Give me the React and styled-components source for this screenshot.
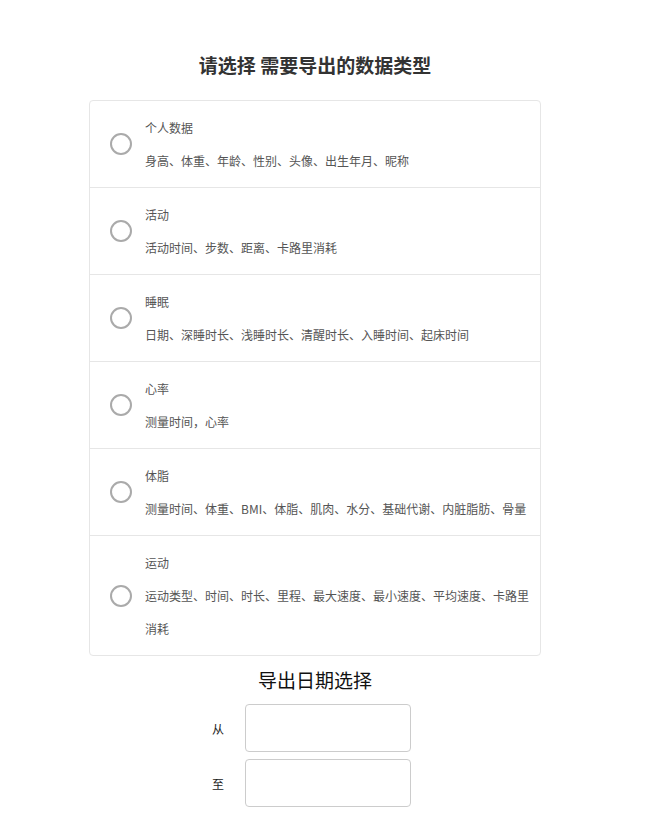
import React from "react";
import styled, { createGlobalStyle } from "styled-components";

const GlobalStyle = createGlobalStyle`
  body {
    margin: 0;
    background: #fff;
    font-family: "Noto Sans CJK SC", "Noto Sans", sans-serif;
  }
`;

const Page = styled.div`
  width: 630px;
  padding-top: 53px;
`;

const Title = styled.h2`
  margin: 0 0 23px;
  font-size: 19px;
  line-height: 24px;
  font-weight: 700;
  color: #333;
  text-align: center;
`;

const Card = styled.div`
  width: 450px;
  margin: 0 auto;
  border: 1px solid #e6e6e6;
  border-radius: 4px;
`;

const Row = styled.label`
  display: flex;
  align-items: center;
  gap: 13px;
  padding: 10px 10px 10px 20px;
  border-top: ${(p) => (p.first ? "none" : "1px solid #e6e6e6")};
  cursor: pointer;
`;

const Radio = styled.span`
  flex: none;
  width: 18px;
  height: 18px;
  border: 2px solid #aaa;
  border-radius: 50%;
`;

const Text = styled.div`
  flex: 1;
  font-size: 12px;
  line-height: 33px;
  color: #555;
`;

const DateTitle = styled.h3`
  margin: 11px 0 11px;
  font-size: 19px;
  line-height: 26px;
  font-weight: 400;
  color: #111;
  text-align: center;
`;

const DateForm = styled.div`
  display: flex;
  flex-direction: column;
  gap: 7px;
  padding-left: 212px;
`;

const DateRow = styled.div`
  display: flex;
  align-items: center;
  gap: 21px;
`;

const DateLabel = styled.span`
  width: 12px;
  font-size: 12px;
  color: #222;
`;

const DateInput = styled.input`
  box-sizing: border-box;
  width: 166px;
  height: 48px;
  border: 1px solid #ccc;
  border-radius: 4px;
  outline: none;
  font-size: 14px;
`;

const types = [
  { name: "个人数据", desc: "身高、体重、年龄、性别、头像、出生年月、昵称" },
  { name: "活动", desc: "活动时间、步数、距离、卡路里消耗" },
  { name: "睡眠", desc: "日期、深睡时长、浅睡时长、清醒时长、入睡时间、起床时间" },
  { name: "心率", desc: "测量时间，心率" },
  { name: "体脂", desc: "测量时间、体重、BMI、体脂、肌肉、水分、基础代谢、内脏脂肪、骨量" },
  { name: "运动", desc: "运动类型、时间、时长、里程、最大速度、最小速度、平均速度、卡路里消耗" },
];

export default function App() {
  return (
    <>
      <GlobalStyle />
      <Page>
        <Title>请选择 需要导出的数据类型</Title>
        <Card>
          {types.map((t, i) => (
            <Row key={t.name} first={i === 0}>
              <Radio />
              <Text>
                <div>{t.name}</div>
                <div>{t.desc}</div>
              </Text>
            </Row>
          ))}
        </Card>
        <DateTitle>导出日期选择</DateTitle>
        <DateForm>
          <DateRow>
            <DateLabel>从</DateLabel>
            <DateInput type="text" />
          </DateRow>
          <DateRow>
            <DateLabel>至</DateLabel>
            <DateInput type="text" />
          </DateRow>
        </DateForm>
      </Page>
    </>
  );
}
